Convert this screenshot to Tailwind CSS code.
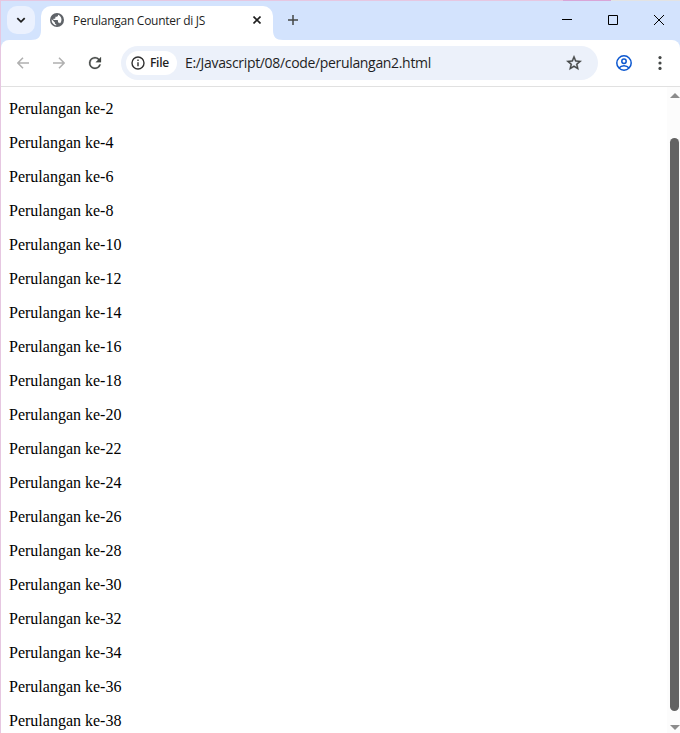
<!DOCTYPE html>
<html lang="id">
<head>
<meta charset="utf-8">
<title>Perulangan Counter di JS</title>
<script src="https://cdn.jsdelivr.net/npm/@tailwindcss/browser@4"></script>
</head>
<body class="w-[680px] h-[733px] overflow-hidden bg-white font-['Open_Sans','Noto_Sans',sans-serif]">
<div class="flex flex-col w-[680px] h-[733px] border-l border-[#e6c7e1]">
  <div class="flex h-px shrink-0 -ml-px"><div class="w-[563px] bg-[#e6c7e1]"></div><div class="w-12 bg-[#d9a5d7]"></div><div class="flex-1 bg-[#e3e3e3]"></div></div>
  <header class="flex h-[39px] shrink-0 bg-[#d3e3fd] pt-[5px] pl-[6px]">
    <button class="flex items-center justify-center size-7 rounded-[10px] bg-[#ebf1fe]">
      <svg class="size-3" viewBox="0 0 12 12" fill="none" stroke="#1f1f1f" stroke-width="1.8"><path d="M2.300 4.200 6 7.800l3.700-3.600"/></svg>
    </button>
    <svg class="w-[10px] h-[34px] -ml-1" viewBox="0 0 10 34" fill="#fff"><path d="M0 34C7 34 10 31 10 24V34Z"/></svg>
    <div class="flex w-[232px] h-[34px] bg-white rounded-t-[10px] pl-[9px] pr-[12px] items-start">
      <svg class="size-[14px] mt-[7px] shrink-0" viewBox="0 0 14 14"><circle cx="7" cy="7" r="7" fill="#5f6368"/><path d="M8 1.700v.9c0 .7-.6 1.200-1.300 1.200H5.400v1.200c0 .4-.3.700-.7.700H3.400v1.200h3.900c.4 0 .7.300.7.700v1.900h.7c.6 0 1 .4 1.200.9A5.300 5.300 0 0 0 8 1.700ZM1.700 6.300 4.900 9.500V10c0 .7.600 1.300 1.300 1.300v1.100A5.400 5.400 0 0 1 1.700 6.300Z" fill="#fff"/></svg>
      <span class="ml-[9px] mt-[6px] text-[12px] leading-[18px] text-[#1f1f1f] whitespace-nowrap tracking-[-0.28px]">Perulangan Counter di JS</span>
      <svg class="size-[8px] mt-[10px] ml-auto shrink-0" viewBox="0 0 8 8" stroke="#1f1f1f" stroke-width="1.6"><path d="m.5.5 7 7m0-7-7 7"/></svg>
    </div>
    <svg class="w-[10px] h-[34px]" viewBox="0 0 10 34" fill="#fff"><path d="M10 34C3 34 0 31 0 24V34Z"/></svg>
    <svg class="size-[10px] ml-[5px] mt-[9px]" viewBox="0 0 10 10" stroke="#444746" stroke-width="1.5"><path d="M5 0v10M0 5h10"/></svg>
    <div class="flex ml-auto mt-[9px] mr-4 gap-9">
      <svg class="size-[10px]" viewBox="0 0 10 10" stroke="#000"><path d="M0 4.5h10"/></svg>
      <svg class="size-[10px]" viewBox="0 0 10 10" fill="none" stroke="#000"><path d="M.5.5h9v9h-9z"/></svg>
      <svg class="size-[10px]" viewBox="0 0 10 10" stroke="#000"><path d="m0 0 10 10M10 0 0 10"/></svg>
    </div>
  </header>
  <div class="bg-[#d3e3fd] shrink-0">
    <nav class="flex items-center h-[47px] rounded-t-[8px] bg-white border-b border-[#e1e1e1] pl-[16px] pr-[18px]">
      <svg class="w-3 h-[12px]" viewBox="0 0 12 12" fill="none" stroke="#b0b0b0" stroke-width="1.5"><path d="M12 6H1M6 .7.9 6 6 11.3"/></svg>
      <svg class="w-3 h-[12px] ml-6" viewBox="0 0 12 12" fill="none" stroke="#b0b0b0" stroke-width="1.5"><path d="M0 6h11M6 .7 11.1 6 6 11.3"/></svg>
      <svg class="size-[18px] ml-[21px]" viewBox="0 0 24 24" fill="#444746" stroke="#444746" stroke-width=".3"><path d="M17.65 6.35A7.96 7.96 0 0 0 12 4a8 8 0 1 0 7.73 10h-2.08A6 6 0 1 1 12 6c1.66 0 3.14.69 4.22 1.78L13 11h7V4z"/></svg>
      <div class="flex items-center w-[477px] h-[34px] ml-[17px] rounded-full bg-[#ecf1fa] pl-[5px] pr-[15px]">
        <div class="flex items-center h-6 w-[51px] rounded-full bg-white pl-[5px]">
          <svg class="size-[14px] shrink-0" viewBox="0 0 14 14" fill="none" stroke="#303030" stroke-width="1.4"><circle cx="7" cy="7" r="6"/><path d="M7 6.2v4M7 3.6v1.5"/></svg>
          <span class="ml-[5px] text-[12px] leading-4 font-semibold text-[#1f1f1f] tracking-[-0.3px]">File</span>
        </div>
        <span class="ml-2 text-[14px] leading-5 text-[#1f1f1f] whitespace-nowrap tracking-[-0.33px]">E:/Javascript/08/code/perulangan2.html</span>
        <svg class="size-[18px] ml-auto shrink-0" viewBox="0 0 24 24" fill="#444746" stroke="#444746" stroke-width=".5"><path d="m22 9.24-7.19-.62L12 2 9.19 8.63 2 9.24l5.46 4.73L5.82 21 12 17.27 18.18 21l-1.63-7.03L22 9.24zM12 15.4l-3.76 2.27 1-4.28-3.32-2.88 4.38-.38L12 6.1l1.71 4.04 4.38.38-3.32 2.88 1 4.28L12 15.4z"/></svg>
      </div>
      <svg class="size-4 ml-[18px]" viewBox="0 0 16 16" fill="none" stroke="#0b57d0" stroke-width="1.5"><circle cx="8" cy="8" r="7.2"/><circle cx="8" cy="6.3" r="2.2"/><path d="M3 13c2.5-3 7.500-3 10 0"/></svg>
      <svg class="w-[4px] h-[14px] ml-auto" viewBox="0 0 4 14" fill="#444746"><circle cx="2" cy="1.6" r="1.6"/><circle cx="2" cy="7" r="1.6"/><circle cx="2" cy="12.400" r="1.6"/></svg>
    </nav>
  </div>
  <div class="flex flex-1 min-h-0">
    <main id="isi" class="flex flex-col flex-1 gap-4 pt-[13px] pl-2 overflow-hidden text-[16px] leading-[18px] text-black font-['Liberation_Serif',serif]"></main>
    <div class="flex flex-col items-center w-[13px] bg-[#fcfcfc] pt-[6px] pb-[3px] pl-[2px]">
      <svg class="w-[10px] h-[5px] shrink-0" viewBox="0 0 10 5" fill="#8b8b8b"><path d="M5 0 10 5H0z"/></svg>
      <div class="w-[9px] h-[573px] mt-[40px] rounded-full bg-[#636363] shrink-0"></div>
      <svg class="w-[10px] h-[5px] mt-auto shrink-0" viewBox="0 0 10 5" fill="#8b8b8b"><path d="M5 5 10 0H0z"/></svg>
    </div>
  </div>
</div>
<script>
for (let i = 2; i <= 38; i += 2) {
  const p = document.createElement('p');
  p.className = 'shrink-0';
  p.textContent = 'Perulangan ke-' + i;
  document.getElementById('isi').append(p);
}
</script>
</body>
</html>
